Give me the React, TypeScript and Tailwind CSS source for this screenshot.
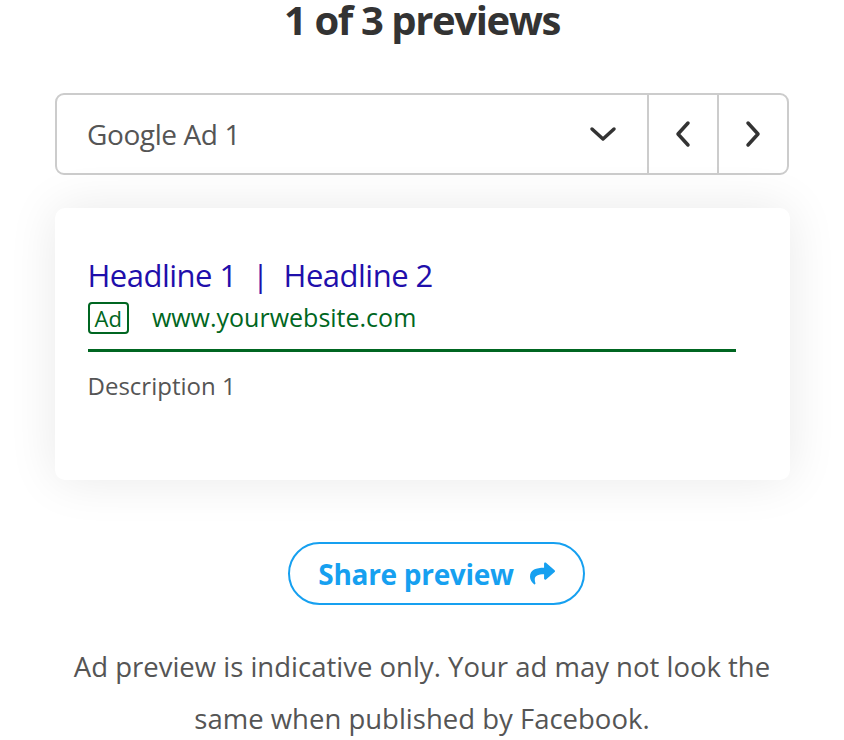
import React from "react";
import { FaShare } from "react-icons/fa";

const font = { fontFamily: '"Open Sans", "Noto Sans", sans-serif' };

function Chevron({ dir }: { dir: "down" | "left" | "right" }) {
  if (dir === "down")
    return (
      <svg width="28" height="16" viewBox="0 0 28 16" fill="none">
        <path d="M3 3 L14 13 L25 3" stroke="#333" strokeWidth="3.5" strokeLinecap="round" strokeLinejoin="round" />
      </svg>
    );
  if (dir === "left")
    return (
      <svg width="18" height="28" viewBox="0 0 18 28" fill="none">
        <path d="M14 3 L4 14 L14 25" stroke="#333" strokeWidth="3.5" strokeLinecap="round" strokeLinejoin="round" />
      </svg>
    );
  return (
    <svg width="18" height="28" viewBox="0 0 18 28" fill="none">
      <path d="M4 3 L14 14 L4 25" stroke="#333" strokeWidth="3.5" strokeLinecap="round" strokeLinejoin="round" />
    </svg>
  );
}

export default function App() {
  return (
    <div className="w-full min-h-[740px] bg-white flex flex-col items-center" style={font}>
      <div className="h-[93px] flex items-start">
        <h1 className="text-[40px] leading-[40px] font-bold text-[#333] tracking-[-1.4px]">
          1 of 3 previews
        </h1>
      </div>
      <div className="w-[734px] h-[82px] flex border-2 border-[#cccccc] rounded-[9px] bg-white">
        <div className="flex-1 flex items-center justify-between pl-[30px] pr-[30px]">
          <span className="text-[28px] text-[#555] tracking-[-0.4px]">Google Ad 1</span>
          <Chevron dir="down" />
        </div>
        <div className="w-[70px] border-l-2 border-[#cccccc] flex items-center justify-center">
          <Chevron dir="left" />
        </div>
        <div className="w-[70px] border-l-2 border-[#cccccc] flex items-center justify-center">
          <Chevron dir="right" />
        </div>
      </div>
      <div className="mt-[33px] w-[735px] h-[272px] bg-white rounded-[10px] shadow-[0_0_50px_rgba(0,0,0,0.09)] pl-[33px] pr-[54px] pt-[48px]">
        <div className="text-[31px] leading-[38px] text-[#1f0fab] tracking-[-0.5px]">
          Headline 1&nbsp;&nbsp;|&nbsp;&nbsp;Headline 2
        </div>
        <div className="flex items-center mt-[5px] gap-[23px]">
          <span className="border-2 border-[#006621] rounded-[4px] text-[#006621] text-[22px] leading-[26px] px-[5px] h-[32px] flex items-center">
            Ad
          </span>
          <span className="text-[25px] text-[#006621] tracking-[0px]">www.yourwebsite.com</span>
        </div>
        <div className="mt-[12px] h-[3px] bg-[#006621]" />
        <div className="mt-[16px] text-[24px] text-[#555] tracking-[0px]">Description 1</div>
      </div>
      <button className="mt-[62px] ml-[29px] w-[297px] h-[63px] border-2 border-[#16a0f0] rounded-full flex items-center justify-center gap-[16px] text-[#16a0f0] text-[28px] font-bold tracking-[-0.3px]">
        <span>Share preview</span>
        <FaShare size={25} />
      </button>
      <p className="mt-[36px] w-[716px] text-center text-[27.5px] leading-[52px] text-[#555] tracking-[0px]">
        Ad preview is indicative only. Your ad may not look the same when published by Facebook.
      </p>
    </div>
  );
}
